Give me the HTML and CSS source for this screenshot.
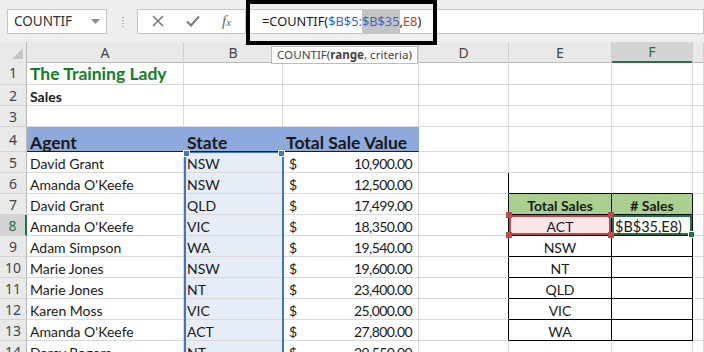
FILE: index.html
```html
<!DOCTYPE html>
<html lang="en">
<head>
    <meta charset="UTF-8">
    <meta name="viewport" content="width=device-width, initial-scale=1.0">
    <link rel="stylesheet" href="styles.css">
</head>
<body>
    <div class="toolbar">
        <div class="namebox">
            <span>COUNTIF</span>
            <svg class="caret" width="9" height="5" viewBox="0 0 9 5"><path d="M0 0 L9 0 L4.5 5 Z" fill="#8a8a8a"/></svg>
        </div>
        <div class="grip"></div>
        <div class="fbuttons">
            <svg width="12" height="12" viewBox="0 0 12 12"><path d="M1 1 L11 11 M11 1 L1 11" stroke="#7a7a7a" stroke-width="1.6"/></svg>
            <svg width="14" height="12" viewBox="0 0 14 12"><path d="M1 6.5 L5 10.5 L13 1.5" stroke="#7a7a7a" stroke-width="2" fill="none"/></svg>
            <span class="fx">f<i>x</i></span>
        </div>
        <div class="formula">=COUNTIF(<span class="ref-blue">$B$5:</span><span class="ref-blue hl">$B$35</span>,<span class="ref-red">E8</span>)</div>
        <div class="callout"></div>
    </div>

    <div class="sheet">
        <div class="row head">
            <div class="rh corner"><svg width="11" height="11" viewBox="0 0 11 11"><path d="M11 0 L11 11 L0 11 Z" fill="#c4c4c4"/></svg></div>
            <div class="ch">A</div>
            <div class="ch">B</div>
            <div class="ch">C</div>
            <div class="ch">D</div>
            <div class="ch">E</div>
            <div class="ch active-col">F</div>
            <div class="ch"></div>
        </div>

        <div class="row r1">
            <div class="rh">1</div>
            <div class="c title">The Training Lady</div>
            <div class="c"></div><div class="c"></div><div class="c"></div><div class="c"></div><div class="c"></div><div class="c"></div>
        </div>
        <div class="row">
            <div class="rh">2</div>
            <div class="c bold">Sales</div>
            <div class="c"></div><div class="c"></div><div class="c"></div><div class="c"></div><div class="c"></div><div class="c"></div>
        </div>
        <div class="row">
            <div class="rh">3</div>
            <div class="c"></div><div class="c"></div><div class="c"></div><div class="c"></div><div class="c"></div><div class="c"></div><div class="c"></div>
        </div>
        <div class="row r4">
            <div class="rh">4</div>
            <div class="c th">Agent</div>
            <div class="c th">State</div>
            <div class="c th">Total Sale Value</div>
            <div class="c"></div><div class="c"></div><div class="c"></div><div class="c"></div>
        </div>
        <div class="row">
            <div class="rh">5</div>
            <div class="c">David Grant</div>
            <div class="c sel">NSW</div>
            <div class="c money"><span>$</span><span>10,900.00</span></div>
            <div class="c"></div><div class="c"></div><div class="c"></div><div class="c"></div>
        </div>
        <div class="row">
            <div class="rh">6</div>
            <div class="c">Amanda O'Keefe</div>
            <div class="c sel">NSW</div>
            <div class="c money"><span>$</span><span>12,500.00</span></div>
            <div class="c box-left"></div><div class="c box-top"></div><div class="c box-top"></div><div class="c"></div>
        </div>
        <div class="row">
            <div class="rh">7</div>
            <div class="c">David Grant</div>
            <div class="c sel">QLD</div>
            <div class="c money"><span>$</span><span>17,499.00</span></div>
            <div class="c box-left"></div>
            <div class="c box green center bold">Total Sales</div>
            <div class="c box green center bold">#&nbsp;Sales</div>
            <div class="c"></div>
        </div>
        <div class="row">
            <div class="rh active-row">8</div>
            <div class="c">Amanda O'Keefe</div>
            <div class="c sel">VIC</div>
            <div class="c money"><span>$</span><span>18,350.00</span></div>
            <div class="c box-left"></div>
            <div class="c box center crit">ACT
                <i class="h tl"></i><i class="h tr"></i><i class="h bl"></i><i class="h br"></i>
            </div>
            <div class="c box active">$B$35,E8)<i class="fill"></i></div>
            <div class="c"></div>
        </div>
        <div class="row">
            <div class="rh">9</div>
            <div class="c">Adam Simpson</div>
            <div class="c sel">WA</div>
            <div class="c money"><span>$</span><span>19,540.00</span></div>
            <div class="c box-left"></div>
            <div class="c box center">NSW</div>
            <div class="c box"></div>
            <div class="c"></div>
        </div>
        <div class="row">
            <div class="rh">10</div>
            <div class="c">Marie Jones</div>
            <div class="c sel">NSW</div>
            <div class="c money"><span>$</span><span>19,600.00</span></div>
            <div class="c box-left"></div>
            <div class="c box center">NT</div>
            <div class="c box"></div>
            <div class="c"></div>
        </div>
        <div class="row">
            <div class="rh">11</div>
            <div class="c">Marie Jones</div>
            <div class="c sel">NT</div>
            <div class="c money"><span>$</span><span>23,400.00</span></div>
            <div class="c box-left"></div>
            <div class="c box center">QLD</div>
            <div class="c box"></div>
            <div class="c"></div>
        </div>
        <div class="row">
            <div class="rh">12</div>
            <div class="c">Karen Moss</div>
            <div class="c sel">VIC</div>
            <div class="c money"><span>$</span><span>25,000.00</span></div>
            <div class="c box-left"></div>
            <div class="c box center">VIC</div>
            <div class="c box"></div>
            <div class="c"></div>
        </div>
        <div class="row">
            <div class="rh">13</div>
            <div class="c">Amanda O'Keefe</div>
            <div class="c sel">ACT</div>
            <div class="c money"><span>$</span><span>27,800.00</span></div>
            <div class="c box-left"></div>
            <div class="c box center">WA</div>
            <div class="c box"></div>
            <div class="c"></div>
        </div>
        <div class="row">
            <div class="rh">14</div>
            <div class="c">Darcy Rogers</div>
            <div class="c sel">NT</div>
            <div class="c money"><span>$</span><span>29,550.00</span></div>
            <div class="c"></div><div class="c"></div><div class="c"></div><div class="c"></div>
        </div>

        <div class="tip">COUNTIF(<b>range</b>, criteria)</div>
        <div class="range-b"><i class="h tl"></i><i class="h tr"></i></div>
    </div>
</body>
</html>
```

FILE: styles.css
```css
body {
    margin: 0;
    width: 704px;
    height: 352px;
    overflow: hidden;
    background-color: #fff;
    font-family: Lato, "Liberation Sans", sans-serif;
    color: #1a1a1a;
}

/* formula bar */
.toolbar {
    position: relative;
    height: 42px;
    display: flex;
    align-items: center;
    padding-left: 7px;
    background-color: #eeeeee;
    box-sizing: border-box;
}

.namebox {
    width: 100px;
    height: 25px;
    box-sizing: border-box;
    border: 1px solid #c6c6c6;
    background-color: #fff;
    display: flex;
    align-items: center;
    justify-content: space-between;
    padding: 0 6px 0 6px;
    font-family: "Noto Sans", sans-serif;
    font-size: 13.5px;
    color: #333;
}

.grip {
    width: 2px;
    height: 11px;
    margin: 0 13px 0 15px;
    background-image: radial-gradient(circle, #b0b0b0 0.8px, transparent 1px);
    background-size: 2px 3px;
}

.fbuttons {
    width: 108px;
    height: 25px;
    box-sizing: border-box;
    border: 1px solid #c6c6c6;
    border-right: none;
    background-color: #fff;
    display: flex;
    align-items: center;
    gap: 22px;
    padding-left: 14px;
}

.fx {
    font-family: "Liberation Serif", serif;
    font-style: italic;
    font-size: 15px;
    color: #6a6a6a;
}

.fx i {
    font-size: 11px;
}

.formula {
    flex: 1;
    height: 25px;
    box-sizing: border-box;
    border: 1px solid #c6c6c6;
    background-color: #fff;
    display: flex;
    align-items: center;
    padding-left: 16px;
    font-family: "Noto Sans", sans-serif;
    font-size: 12.8px;
    color: #222;
    white-space: pre;
}

.ref-blue {
    color: #3a6bc4;
}

.ref-red {
    color: #c0392b;
}

.hl {
    background-color: #c4c4c4;
    padding: 3px 0;
}

.callout {
    position: absolute;
    left: 246px;
    top: 0;
    width: 191px;
    height: 45px;
    border: 4px solid #000;
    box-sizing: border-box;
    z-index: 3;
}

/* grid */
.sheet {
    position: relative;
    height: 310px;
    overflow: hidden;
}

.row {
    display: grid;
    grid-template-columns: 27px 157px 99px 136px 90px 103px 81px 1fr;
    height: 21px;
}

.row.head {
    height: 19px;
}

.row.r1 {
    height: 24px;
}

.row.r4 {
    height: 25px;
}

.rh, .ch {
    box-sizing: border-box;
    background-color: #e9e9e9;
    font-family: "Noto Sans", sans-serif;
    font-size: 14px;
    color: #444;
    display: flex;
    align-items: center;
    justify-content: center;
}

.ch {
    border-right: 1px solid #cfcfcf;
    border-bottom: 1px solid #b9b9b9;
}

.rh {
    border-right: 1px solid #b9b9b9;
    border-bottom: 1px solid #d4d4d4;
}

.corner {
    justify-content: flex-end;
    align-items: flex-end;
    padding: 0 3px 3px 0;
}

.active-col {
    background-color: #d4d4d4;
    color: #217346;
    border-bottom: 2px solid #217346;
}

.active-row {
    background-color: #d4d4d4;
    color: #217346;
    border-right: 2px solid #217346;
}

.c {
    position: relative;
    box-sizing: border-box;
    border-right: 1px solid #d9d9d9;
    border-bottom: 1px solid #d9d9d9;
    padding: 0 3px 1px 3px;
    display: flex;
    align-items: flex-end;
    font-size: 14px;
    line-height: 1;
    white-space: nowrap;
}

.title {
    font-size: 17.5px;
    font-weight: bold;
    color: #10801f;
    padding-bottom: 2px;
}

.bold {
    font-weight: bold;
}

.th {
    background-color: #8ea9db;
    border-right-color: #8ea9db;
    border-bottom: 1px solid #1f1f1f;
    font-size: 17.5px;
    font-weight: bold;
    padding-bottom: 0;
}

.sel {
    background-color: #e7edf7;
}

.money {
    justify-content: space-between;
    padding: 0 6px 1px 6px;
}

.money span:last-child {
    letter-spacing: -0.6px;
}

.center {
    justify-content: center;
}

.box-left {
    border-right-color: #000;
}

.box-top {
    border-bottom-color: #000;
}

.box {
    border-right-color: #000;
    border-bottom-color: #000;
}

.green {
    background-color: #a9d08e;
}

.crit {
    background-color: #fae6e6;
    box-shadow: inset 0 0 0 2px #be4b4b;
}

.crit .h {
    background-color: #be4b4b;
}

.active {
    box-shadow: inset 0 0 0 2px #217346;
    padding-left: 3px;
    font-size: 14.5px;
}

.fill {
    position: absolute;
    right: -3px;
    bottom: -3px;
    width: 5px;
    height: 5px;
    background-color: #217346;
    border: 1px solid #fff;
    z-index: 2;
}

.h {
    position: absolute;
    width: 6px;
    height: 6px;
    z-index: 2;
}

.h.tl { left: -3px; top: -3px; }
.h.tr { right: -3px; top: -3px; }
.h.bl { left: -3px; bottom: -3px; }
.h.br { right: -3px; bottom: -3px; }

.tip {
    position: absolute;
    left: 271px;
    top: 4px;
    height: 16px;
    padding: 0 5px;
    background-color: #fff;
    border: 1px solid #bdbdbd;
    font-family: "Noto Sans", sans-serif;
    font-size: 11.6px;
    line-height: 16px;
    color: #444;
    z-index: 2;
}

.range-b {
    position: absolute;
    left: 184px;
    top: 110px;
    width: 100px;
    height: 210px;
    box-sizing: border-box;
    border: 2px solid #4472c4;
    border-top-width: 1px;
    border-bottom: none;
}

.range-b .h {
    background-color: #4472c4;
    border: 1px solid #fff;
    width: 5px;
    height: 5px;
}
```
